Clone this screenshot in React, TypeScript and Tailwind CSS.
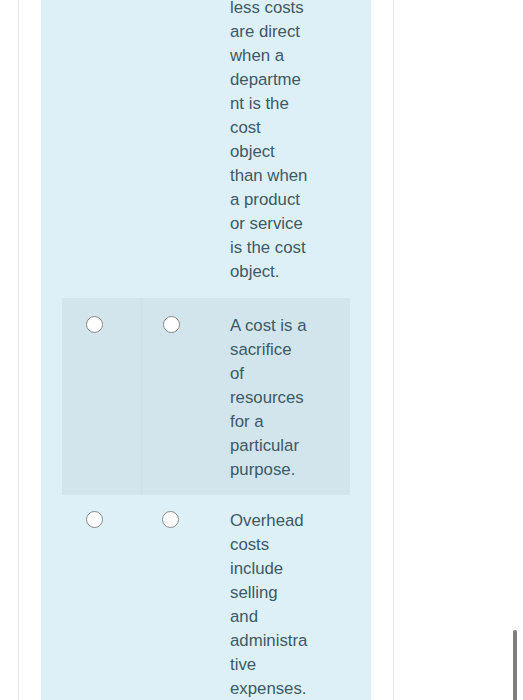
import React from "react";

const Radio = () => (
  <span className="block h-[17px] w-[17px] rounded-full border-[1.5px] border-[#878787] bg-white" />
);

const Lines = ({ lines, pad }: { lines: string[]; pad: string }) => (
  <div className={`w-[80px] text-[16.8px] leading-[24px] text-[#3c5966] ${pad}`}>
    {lines.map((l, i) => (
      <div key={i} className="whitespace-nowrap">
        {l}
      </div>
    ))}
  </div>
);

const Row = ({
  lines,
  radios,
  shaded,
  pad,
  textPad,
}: {
  lines: string[];
  radios: boolean;
  shaded?: boolean;
  pad: string;
  textPad: string;
}) => (
  <div className={`flex ${shaded ? "bg-[#d2e5ed]" : ""}`}>
    <div className={`w-[79px] shrink-0 pl-[24px] ${pad}`}>
      <div className="pt-[3px]">{radios && <Radio />}</div>
    </div>
    <div
      className={`w-[89px] shrink-0 pl-[21px] ${pad} ${shaded ? "border-l border-[#cee1e9]" : ""}`}
    >
      <div className="pt-[3px]">{radios && <Radio />}</div>
    </div>
    <Lines lines={lines} pad={textPad} />
  </div>
);

export default function App() {
  return (
    <div
      className="relative h-[700px] w-[523px] overflow-hidden bg-white"
      style={{ fontFamily: '"Liberation Sans", Arial, sans-serif' }}
    >
      <div className="ml-[18px] flex h-full w-[376px] border-x border-[#e6e6e6] px-[22px]">
        <div className="h-full w-[330px] bg-[#def0f7] px-[21px]">
          <div className="-mt-[5px]">
            <Row
              radios={false}
              pad="pb-[15px]"
              textPad="pt-[1px] pb-[14px]"
              lines={[
                "less costs",
                "are direct",
                "when a",
                "departme",
                "nt is the",
                "cost",
                "object",
                "than when",
                "a product",
                "or service",
                "is the cost",
                "object.",
              ]}
            />
            <Row
              radios
              shaded
              pad="pt-[15px] pb-[14px]"
              textPad="pt-[16px] pb-[13px]"
              lines={[
                "A cost is a",
                "sacrifice",
                "of",
                "resources",
                "for a",
                "particular",
                "purpose.",
              ]}
            />
            <Row
              radios
              pad="pt-[13px]"
              textPad="pt-[14px]"
              lines={[
                "Overhead",
                "costs",
                "include",
                "selling",
                "and",
                "administra",
                "tive",
                "expenses.",
              ]}
            />
          </div>
        </div>
      </div>
      <div className="absolute left-[513px] top-[630px] h-[80px] w-[4px] rounded-full bg-[#7f7f7f]" />
    </div>
  );
}
